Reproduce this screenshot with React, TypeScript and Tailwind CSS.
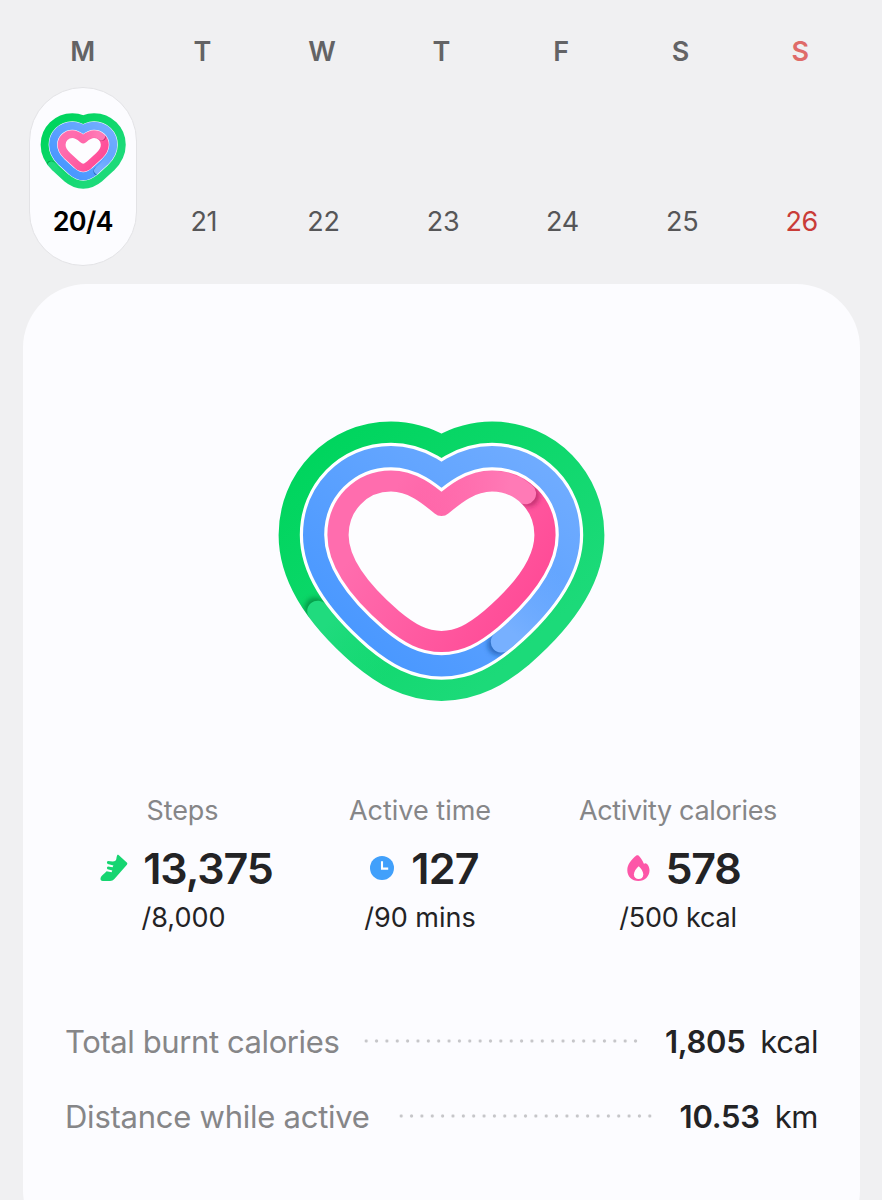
import React, { useId } from 'react';

const HEART =
  'M441.5 505.5C428 494 412 481 391 481C361 481 338 505 338 535C338 568 370 600 392 619C410 634 424 641.5 441.5 641.5C459 641.5 473 634 491 619C513 600 545 568 545 535C545 505 522 481 492 481C471 481 455 494 441.5 505.5Z';

// The small heart has straighter sides and a sharper tip
const MINI_HEART =
  'M441.5 509C428 498 414 484 391 484C363 484 341 506 341 533C341 557 353 570 367 584L414 627C426 637 433 640.5 441.5 640.5C450 640.5 457 637 469 627L516 584C530 570 542 557 542 533C542 506 520 484 492 484C469 484 455 498 441.5 509Z';

// x, y on the heart and the outward normal at that point
type TailPoint = [number, number, number, number];

interface RingStyle {
  from: string;
  to: string;
  light: string;
  shadow: string;
  gradient: [number, number, number, number];
  tail: TailPoint[];
}

const GREEN: RingStyle = {
  from: '#00d55e',
  to: '#1cda79',
  light: '#20db7e',
  shadow: '#007a35',
  gradient: [290, 480, 480, 690],
  tail: [
    [356.8, 582, -0.8, 0.6],
    [373, 602, -0.73, 0.68],
    [392, 619, -0.65, 0.757],
    [415, 635, -0.48, 0.88],
  ],
};

const BLUE: RingStyle = {
  from: '#4a98ff',
  to: '#74aeff',
  light: '#77b0ff',
  shadow: '#174f9e',
  gradient: [420, 690, 600, 470],
  tail: [
    [486, 623, 0.63, 0.777],
    [510, 602, 0.68, 0.73],
    [526, 582, 0.8, 0.6],
    [539, 560, 0.92, 0.39],
  ],
};

const PINK: RingStyle = {
  from: '#ff4c97',
  to: '#ff6dae',
  light: '#ff7ab6',
  shadow: '#a3195a',
  gradient: [545, 575, 400, 480],
  tail: [
    [525.5, 493.7, 0, 0],
    [516, 487, 0, 0],
    [504, 482.5, 0, 0],
    [492, 481, 0, 0],
    [480, 482.3, 0, 0],
    [468, 486.5, 0, 0],
    [455, 495, 0, 0],
    [441.5, 505.5, 0, 0],
    [428, 495, 0, 0],
    [415, 486.5, 0, 0],
  ],
};

interface HeartRingsProps {
  className: string;
  viewBox: string;
  path: string;
  band: number;
  gap: number;
}

const HeartRings: React.FC<HeartRingsProps> = ({ className, viewBox, path, band, gap }) => {
  const id = useId();
  const rings = [GREEN, BLUE, PINK];

  return (
    <svg className={className} viewBox={viewBox} fill="none">
      <defs>
        <filter id={`${id}-soft`} x="-50%" y="-50%" width="200%" height="200%">
          <feGaussianBlur stdDeviation="2.5" />
        </filter>
      </defs>
      {rings.map((ring, i) => {
        const offset = (2 - i) * (band + gap);
        const width = offset * 2 + band;
        const points = ring.tail.map(([x, y, nx, ny]) => [x + nx * offset, y + ny * offset]);
        const [start, next] = points;
        const end = points[points.length - 1];
        const len = Math.hypot(start[0] - next[0], start[1] - next[1]);
        const dx = (start[0] - next[0]) / len;
        const dy = (start[1] - next[1]) / len;
        const [x1, y1, x2, y2] = ring.gradient;

        return (
          <g key={i}>
            <defs>
              <linearGradient id={`${id}-g${i}`} gradientUnits="userSpaceOnUse" x1={x1} y1={y1} x2={x2} y2={y2}>
                <stop offset="0" stopColor={ring.from} />
                <stop offset="1" stopColor={ring.to} />
              </linearGradient>
              <linearGradient
                id={`${id}-t${i}`}
                gradientUnits="userSpaceOnUse"
                x1={start[0]}
                y1={start[1]}
                x2={end[0]}
                y2={end[1]}
              >
                <stop offset="0.15" stopColor={ring.light} />
                <stop offset="0.95" stopColor={ring.light} stopOpacity="0" />
              </linearGradient>
              <mask id={`${id}-m${i}`} maskUnits="userSpaceOnUse" x="200" y="350" width="500" height="450">
                <path d={path} stroke="#fff" strokeWidth={width} strokeLinejoin="round" fill={i < 2 ? '#fff' : 'none'} />
              </mask>
            </defs>
            {i > 0 && (
              <path d={path} stroke="#fff" fill="#fdfdff" strokeWidth={width + gap * 2} strokeLinejoin="round" />
            )}
            {i === 2 && <path d={path} fill="#fdfdff" />}
            <g mask={`url(#${id}-m${i})`}>
              <rect x="200" y="350" width="500" height="450" fill={`url(#${id}-g${i})`} />
              <circle
                cx={start[0] + dx * 4}
                cy={start[1] + dy * 4}
                r={band / 2}
                fill={ring.shadow}
                fillOpacity="0.65"
                filter={`url(#${id}-soft)`}
              />
              <polyline
                points={points.map((p) => p.join(',')).join(' ')}
                stroke={`url(#${id}-t${i})`}
                strokeWidth={band}
                strokeLinecap="round"
                strokeLinejoin="round"
              />
            </g>
          </g>
        );
      })}
    </svg>
  );
};

const ShoeIcon = () => (
  <svg className="h-[28px] w-[28px] shrink-0" viewBox="0 0 28 28">
    <path
      d="M17.2 1.2C17.5.6 18.1.6 18.6 1.1L26.8 8.6C27.5 9.3 27.5 10 26.9 10.7L14.6 24.8C13 26.5 12 27 10 27H2.8C1 27 .4 26.3.5 24.6C.7 22 2.6 21 4.6 19.2L6.6 17.2L11.6 18.2L12.3 16.5L7.6 15.3C6.6 14.8 6.7 12.8 8 12.6L12.6 13.3L13.4 11.5L7.8 9.9C6.6 9.4 6.6 7.3 8 7.1L12.6 7.6C15.2 7.6 16.2 6.4 16.4 4.6C16.5 3.2 16.8 2 17.2 1.2Z"
      fill="#16d571"
    />
  </svg>
);

const ClockIcon = () => (
  <svg className="h-[24px] w-[24px] shrink-0" viewBox="0 0 24 24">
    <circle cx="12" cy="12" r="12" fill="#41a0fb" />
    <path d="M12 5.2V12.6H18.2" fill="none" stroke="#fff" strokeWidth="2.1" />
  </svg>
);

const FlameIcon = () => (
  <svg className="h-[26px] w-[23px] shrink-0" viewBox="0 0 23 26">
    <path
      d="M9.3.6C10 0 10.9 0 11.5.6C13.3 2.4 15.6 5.3 16.9 8.7C17.6 8.9 17.8 8.3 18.3 8.2C20.8 8.5 22.5 12 22.5 15.3C22.5 21.5 17.8 26 11.4 26C4.9 26 .3 21.4.3 15.2C.3 9.5 4.3 4.7 9.3.6Z"
      fill="#fd57a8"
    />
    <path d="M11.7 11.2C14 13.5 16.3 16.3 16.3 19.4C16.3 22.3 14.2 24 11.6 24C9 24 6.9 22.2 6.9 19.4C6.9 16.3 9.3 13.5 11.7 11.2Z" fill="#fff" />
  </svg>
);

const days = [
  { letter: 'M', date: '20/4', active: true },
  { letter: 'T', date: '21' },
  { letter: 'W', date: '22' },
  { letter: 'T', date: '23' },
  { letter: 'F', date: '24' },
  { letter: 'S', date: '25' },
  { letter: 'S', date: '26', holiday: true },
];

const stats = [
  {
    label: 'Steps',
    value: '13,375',
    goal: '/8,000',
    icon: <ShoeIcon />,
    column: 'w-[239px]',
    valueRow: 'gap-[15px] pl-[8px]',
    labelSpacing: 'tracking-[-0.1px]',
    valueSpacing: 'tracking-[-1.1px]',
    goalSpacing: 'pl-[2px] tracking-[0px]',
  },
  {
    label: 'Active time',
    value: '127',
    goal: '/90 mins',
    icon: <ClockIcon />,
    column: 'w-[236px]',
    valueRow: 'gap-[17px] pl-[9px]',
    labelSpacing: 'tracking-[0px]',
    valueSpacing: 'tracking-[-0.7px]',
    goalSpacing: 'tracking-[0px]',
  },
  {
    label: 'Activity calories',
    value: '578',
    goal: '/500 kcal',
    icon: <FlameIcon />,
    column: 'w-[280px]',
    valueRow: 'gap-[16px] pl-[11px]',
    labelSpacing: 'tracking-[-0.35px]',
    valueSpacing: 'tracking-[-1.3px]',
    goalSpacing: 'tracking-[-0.2px]',
  },
];

const totals = [
  {
    label: 'Total burnt calories',
    value: '1,805',
    unit: 'kcal',
    labelClass: 'w-[296px] tracking-[-0.4px]',
    dots: 'w-[280px]',
  },
  {
    label: 'Distance while active',
    value: '10.53',
    unit: 'km',
    labelClass: 'w-[331px] tracking-[-0.25px]',
    dots: 'w-[259px]',
  },
];

export default function App() {
  return (
    <div className="h-[1200px] w-[882px] overflow-hidden bg-[#f0f0f2] font-['Inter','Liberation_Sans',sans-serif] text-[#232325]">
      {/* Week strip */}
      <div className="grid w-[860px] grid-cols-7 pl-[23px] pt-[34px]">
        {days.map((day, i) => (
          <div
            key={i}
            className={`text-center text-[27px] font-semibold leading-[36px] ${day.holiday ? 'text-[#df6b69]' : 'text-[#636365]'}`}
          >
            {day.letter}
          </div>
        ))}
      </div>
      <div className="mt-[17px] grid w-[860px] grid-cols-7 pl-[23px]">
        {days.map((day) =>
          day.active ? (
            <div key={day.date} className="flex justify-center">
              <div className="flex h-[179px] w-[108px] flex-col items-center rounded-full border border-[#e3e3e6] bg-[#fcfcff] pb-[27px] pt-[24px]">
                <HeartRings
                  className="h-[77.6px] w-[88.4px] shrink-0"
                  viewBox="236 381 411 361"
                  path={MINI_HEART}
                  band={37}
                  gap={2.5}
                />
                <div className="mt-auto text-[27px] font-semibold leading-[32px] tracking-[-0.7px] text-black">{day.date}</div>
              </div>
            </div>
          ) : (
            <div
              key={day.date}
              className={`flex items-end justify-center pb-[28px] pl-[3px] text-[27px] leading-[32px] tracking-[-0.3px] ${day.holiday ? 'text-[#c93c38]' : 'text-[#565658]'}`}
            >
              {day.date}
            </div>
          )
        )}
      </div>

      {/* Daily activity */}
      <div className="ml-[23px] mt-[18px] h-[970px] w-[837px] rounded-[64px] bg-[#fcfcff] pt-[131px]">
        <HeartRings className="mx-auto h-[293px] w-[343px]" viewBox="270 415 343 293" path={HEART} band={21.2} gap={3.2} />

        <div className="mt-[87px] flex pl-[40px]">
          {stats.map((stat) => (
            <div key={stat.label} className={`flex flex-col items-center whitespace-nowrap ${stat.column}`}>
              <div className={`text-[27px] leading-[32px] text-[#868688] ${stat.labelSpacing}`}>{stat.label}</div>
              <div className={`mt-[17px] flex h-[48px] items-center ${stat.valueRow}`}>
                {stat.icon}
                <span className={`text-[43px] font-semibold leading-[48px] ${stat.valueSpacing}`}>{stat.value}</span>
              </div>
              <div className={`mt-[10px] text-[27px] leading-[32px] ${stat.goalSpacing}`}>{stat.goal}</div>
            </div>
          ))}
        </div>

        <div className="mt-[88px] flex flex-col gap-[35px] px-[42px]">
          {totals.map((row) => (
            <div key={row.label} className="flex h-[40px] items-center whitespace-nowrap text-[31px] leading-[40px]">
              <span className={`shrink-0 text-[#868688] ${row.labelClass}`}>{row.label}</span>
              <span
                className={`mb-[3px] h-[4px] shrink-0 bg-[radial-gradient(circle,#c6c6c9_1.2px,transparent_2px)] bg-[length:10.37px_4px] ${row.dots}`}
              />
              <span className="ml-auto font-semibold tracking-[-0.3px]">{row.value}</span>
              <span className="ml-[15px] tracking-[-0.4px]">{row.unit}</span>
            </div>
          ))}
        </div>
      </div>
    </div>
  );
}
